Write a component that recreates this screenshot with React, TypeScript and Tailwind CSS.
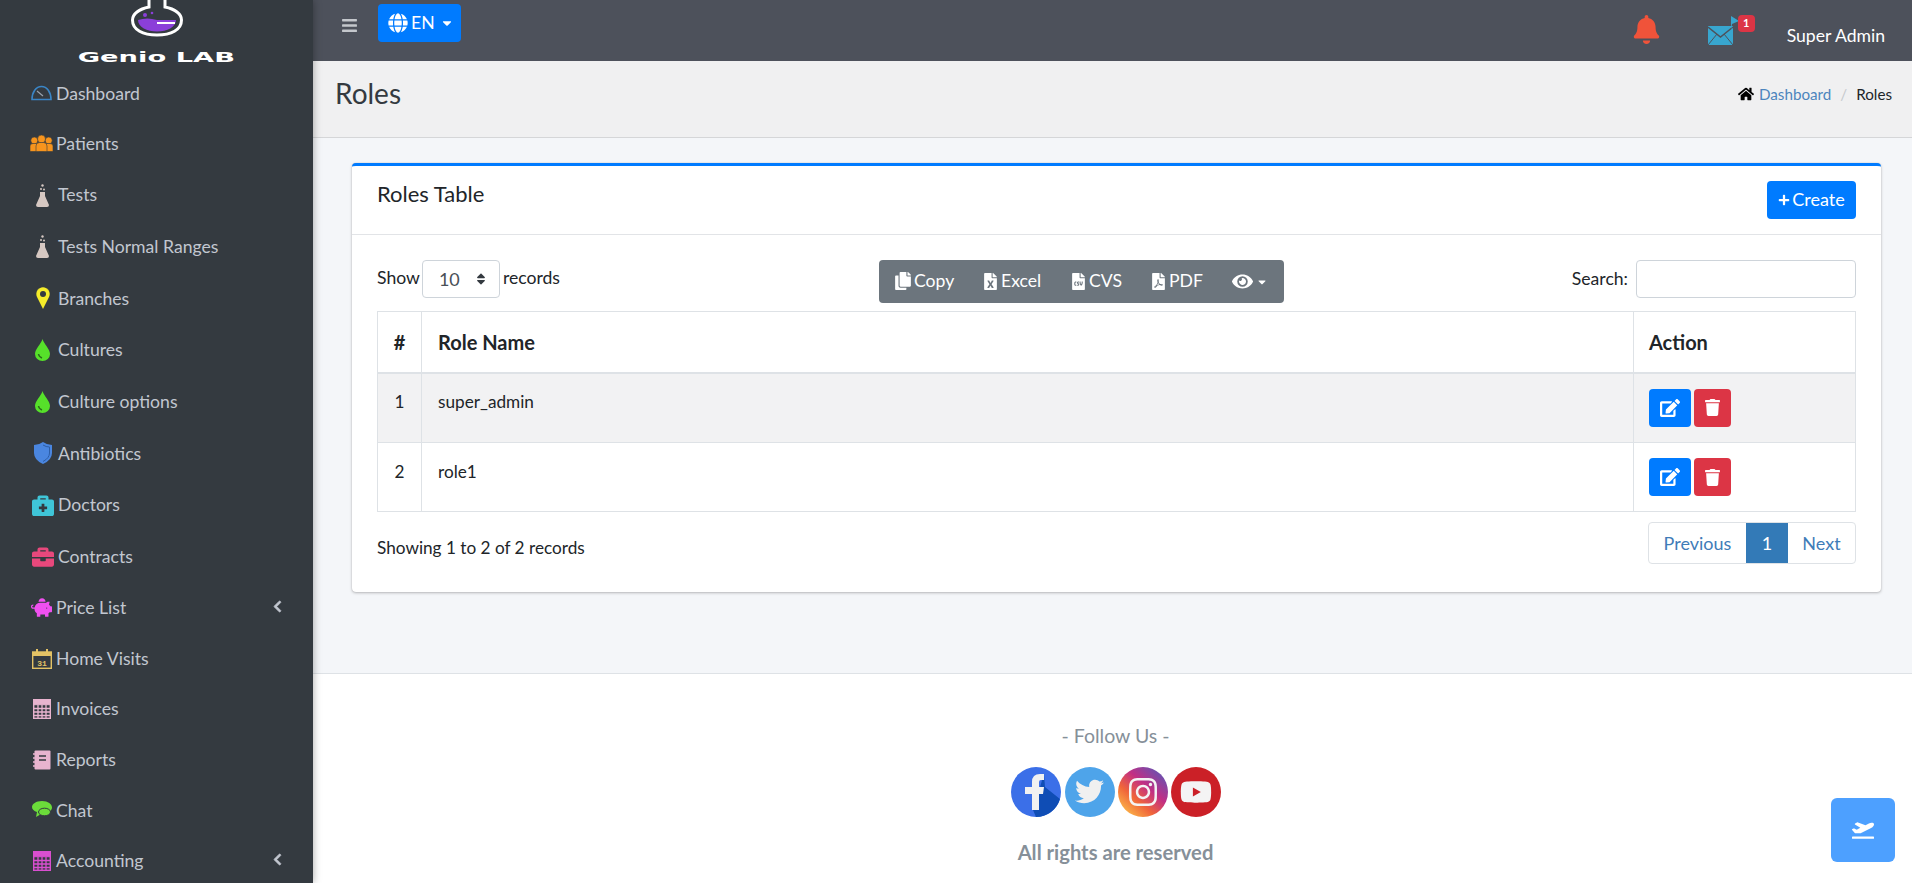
import { ReactNode } from "react";
import {
  FaBars, FaBell, FaCaretDown, FaChevronLeft, FaCopy, FaEdit, FaEye, FaFileCsv,
  FaFileExcel, FaFilePdf, FaGlobe, FaHome, FaInstagram, FaPiggyBank, FaPlaneDeparture, FaPlus,
  FaSort, FaTrash, FaTwitter, FaYoutube, FaBriefcase, FaBriefcaseMedical,
} from "react-icons/fa";

const Gauge = () => (
  <svg width="21" height="16" viewBox="0 0 21 16" fill="none" stroke="#3a85c6" strokeWidth="1.6">
    <path d="M1 14.5 C1 7 5 1.500 10.500 1.500 S20 7 20 14.500 Z" />
    <path d="M6 6 L12 11" strokeWidth="1.2" stroke="#9aa3ad" />
  </svg>
);

const People = () => (
  <svg width="23" height="17" viewBox="0 0 23 17" fill="#f7941d" stroke="#343a40" strokeWidth="0.6">
    <circle cx="4.300" cy="5.500" r="3.500" />
    <circle cx="18.700" cy="5.500" r="3.500" />
    <path d="M0 16.500 V11 Q0 8.500 3 8.500 H6 Q9 8.500 9 11 V16.500 Z" />
    <path d="M14 16.500 V11 Q14 8.500 17 8.500 H20 Q23 8.500 23 11 V16.500 Z" />
    <circle cx="11.500" cy="4" r="4" />
    <path d="M6 16.500 V11 Q6 7.500 9.500 7.500 H13.500 Q17 7.500 17 11 V16.500 Z" />
  </svg>
);

const Flask = () => (
  <svg width="13" height="23" viewBox="0 0 13 23" fill="#d6c8c2">
    <circle cx="6.500" cy="1.500" r="1.200" />
    <circle cx="5" cy="5" r="1" />
    <circle cx="8" cy="5.500" r="1" />
    <path d="M4 8 H9 V12 L13 21 Q13 23 11 23 H2 Q0 23 0 21 L4 12 Z" />
  </svg>
);

const Pin = () => (
  <svg width="14" height="22" viewBox="0 0 14 22">
    <path d="M7 22 L1 10 A6.700 6.700 0 1 1 13 10 Z" fill="#f5ec2a" />
    <circle cx="7" cy="7" r="3" fill="#343a40" />
  </svg>
);

const Drop = () => (
  <svg width="15" height="22" viewBox="0 0 15 22">
    <path d="M7.500 0 C9 5 15 10 15 15 A7.500 7 0 0 1 0 15 C0 10 6 5 7.500 0 Z" fill="#56e02a" />
    <path d="M3.500 15 Q4 18 7 19" fill="none" stroke="#2a6b1a" strokeWidth="1.500" />
  </svg>
);

const Shield = () => (
  <svg width="18" height="22" viewBox="0 0 18 22">
    <path d="M9 0 Q13 3 18 3 V11 Q18 18 9 22 Q0 18 0 11 V3 Q5 3 9 0 Z" fill="#4a86e0" />
    <path d="M9 3 Q12 5 15.500 5 V11 Q15.500 16 9 19.500" fill="none" stroke="#2c5da6" strokeWidth="1" />
  </svg>
);

const Calendar = () => (
  <svg width="20" height="20" viewBox="0 0 20 20">
    <rect x="0.700" y="3" width="18.600" height="16.300" fill="none" stroke="#e3c265" strokeWidth="1.400" />
    <rect x="0.700" y="3" width="18.600" height="4" fill="#e3c265" />
    <rect x="4" y="0" width="2" height="5" fill="#e3c265" />
    <rect x="14" y="0" width="2" height="5" fill="#e3c265" />
    <text x="10" y="16.500" textAnchor="middle" fontSize="8" fontWeight="700" fill="#e3c265" fontFamily="Liberation Mono, monospace">
      31
    </text>
  </svg>
);

const Calc = ({ color }: { color: string }) => (
  <svg width="18" height="20" viewBox="0 0 18 20" fill="none" stroke={color}>
    <rect x="0.700" y="0.700" width="16.600" height="18.600" strokeWidth="1.400" />
    <rect x="0.700" y="0.700" width="16.600" height="5" fill={color} />
    <path d="M0.700 9.500 H17.300 M0.700 13 H17.300 M0.700 16.500 H17.300 M5 6 V19 M9 6 V19 M13 6 V19" strokeWidth="1.300" />
  </svg>
);

const Notebook = () => (
  <svg width="18" height="20" viewBox="0 0 18 20">
    <rect x="1.500" y="0.500" width="16" height="19" rx="1" fill="#e8b4cf" />
    <path d="M6 6 H13 M6 10 H13" stroke="#343a40" strokeWidth="1.600" />
    <path d="M0 4 H3 M0 8 H3 M0 12 H3 M0 16 H3" stroke="#e8b4cf" strokeWidth="1.400" />
  </svg>
);

const Chat = () => (
  <svg width="20" height="18" viewBox="0 0 20 18">
    <path d="M10 0 C16 0 20 3 20 6.500 C20 10 16 12 11 12 L4 16 L5 11 C2 10 0 8.500 0 6 C0 3 4 0 10 0 Z" fill="#6bdc3a" />
    <ellipse cx="12.500" cy="11" rx="6" ry="3.800" fill="#6bdc3a" stroke="#343a40" />
  </svg>
);

type NavItem = { label: string; icon: ReactNode; wide?: boolean; arrow?: boolean };

const navItems: NavItem[] = [
  { label: "Dashboard", icon: <Gauge /> },
  { label: "Patients", icon: <People /> },
  { label: "Tests", icon: <Flask />, wide: true },
  { label: "Tests Normal Ranges", icon: <Flask />, wide: true },
  { label: "Branches", icon: <Pin />, wide: true },
  { label: "Cultures", icon: <Drop />, wide: true },
  { label: "Culture options", icon: <Drop />, wide: true },
  { label: "Antibiotics", icon: <Shield />, wide: true },
  { label: "Doctors", icon: <FaBriefcaseMedical size={22} color="#3fc5d8" />, wide: true },
  { label: "Contracts", icon: <FaBriefcase size={22} color="#e8487c" />, wide: true },
  { label: "Price List", icon: <FaPiggyBank size={21} color="#f050f0" />, arrow: true },
  { label: "Home Visits", icon: <Calendar /> },
  { label: "Invoices", icon: <Calc color="#e8b4cf" /> },
  { label: "Reports", icon: <Notebook /> },
  { label: "Chat", icon: <Chat /> },
  { label: "Accounting", icon: <Calc color="#d94fd0" />, arrow: true },
];

function Sidebar() {
  return (
    <aside className="relative z-10 h-[883px] w-[313px] shrink-0 overflow-hidden bg-[#343a40] text-[17.6px] text-[#c2c7d0] shadow-[0_0_8px_rgba(0,0,0,0.35)]">
      <div className="flex h-[68px] flex-col items-center">
        <svg width="52" height="37" viewBox="0 0 52 37" fill="none">
          <path d="M18 0 V7 C8 9 1.500 14 1.500 20 C1.500 30 12 35 26 35 S50.500 30 50.500 20 C50.500 14 44 9 34 7 V0" stroke="#fff" strokeWidth="3" />
          <path d="M7 20 Q16 17 26 20 H45 C45 27 36 31.500 26 31.500 S7 27 7 20 Z" fill="#8b3fd9" />
          <path d="M26 23 H44" stroke="#fff" strokeWidth="2" />
          <circle cx="14" cy="15" r="2" fill="#8b3fd9" />
          <circle cx="21" cy="13" r="1.300" fill="#8b3fd9" />
        </svg>
        <span className="mt-[14px] inline-block scale-x-[1.95] text-[14px] leading-[12px] font-bold text-white [font-family:'DejaVu_Sans',sans-serif]">
          Genio LAB
        </span>
      </div>
      <nav>
        {navItems.map((item) => (
          <div
            key={item.label}
            className={`relative flex items-center pl-[30px] ${item.wide ? "h-[51.7px]" : "h-[50.6px]"}`}
          >
            <span className={`mr-[3px] flex h-[24px] items-center justify-center ${item.wide ? "w-[25px]" : "w-[23px]"}`}>
              {item.icon}
            </span>
            <span className="leading-none">{item.label}</span>
            {item.arrow && (
              <FaChevronLeft size={13} color="#c2c7d0" stroke="#c2c7d0" strokeWidth={30} className="absolute top-[17px] right-[29px]" />
            )}
          </div>
        ))}
      </nav>
    </aside>
  );
}

function Topbar() {
  return (
    <header className="flex h-[61px] shrink-0 items-start bg-[#4d515b] pl-[28px] text-white">
      <FaBars size={17} color="#c4c7cc" className="mt-[17px]" />
      <button className="mt-[4px] ml-[20px] flex h-[38px] w-[83px] items-center gap-[3px] rounded-[4px] bg-[#007bff] pl-[10px] text-[17.6px]">
        <FaGlobe size={20} />
        <span>EN</span>
        <FaCaretDown size={14} className="ml-[2px]" />
      </button>
      <div className="ml-auto flex items-start">
        <FaBell size={29} color="#f0533a" className="mt-[15px] mr-[47px]" />
        <div className="relative mt-[24px] mr-[53px]">
          <svg width="26" height="21" viewBox="0 0 26 21">
            <rect width="25" height="19" y="2" fill="#38a6cf" />
            <path d="M0 3 L12.500 13 L25 3" fill="none" stroke="#4d515b" strokeWidth="1.500" />
            <path d="M0 21 L9 10 M25 21 L16 10" stroke="#4d515b" />
          </svg>
          <svg width="9" height="14" viewBox="0 0 9 14" className="absolute -top-[8px] left-[22px]">
            <path d="M1 14 V0 L9 5 L2 8" fill="#38a6cf" />
          </svg>
          <span className="absolute -top-[9px] left-[30px] flex h-[17px] w-[17px] items-center justify-center rounded-[4px] bg-[#dc3545] text-[11px] font-bold text-white">
            1
          </span>
        </div>
        <span className="mt-[24px] mr-[27px] text-[17.6px] leading-[24px]">Super Admin</span>
      </div>
    </header>
  );
}

function PageHeader() {
  return (
    <div className="flex h-[77px] shrink-0 items-start justify-between border-b border-[#d5d6d8] bg-[#f0f0f1] pt-[18px] pr-[20px] pl-[22px]">
      <h1 className="text-[28px] leading-[28px] text-[#343a40]">Roles</h1>
      <div className="mt-[1px] flex items-center text-[15.2px] leading-[28px]">
        <FaHome size={16} color="#000" className="mr-[5px]" />
        <span className="text-[#4c85bd]">Dashboard</span>
        <span className="mx-[9px] text-[#c5c9cd]">/</span>
        <span className="text-[#212529]">Roles</span>
      </div>
    </div>
  );
}

function Toolbar() {
  const tools = [
    { icon: <FaCopy size={18} />, label: "Copy", width: "w-[88px]" },
    { icon: <FaFileExcel size={17} />, label: "Excel", width: "w-[88px]" },
    { icon: <FaFileCsv size={17} />, label: "CVS", width: "w-[80px]" },
    { icon: <FaFilePdf size={17} />, label: "PDF", width: "w-[80px]" },
  ];
  return (
    <div className="flex h-[43px] w-[405px] items-center rounded-[4px] bg-[#6c757d] pl-[15px] text-[17.6px] text-white">
      {tools.map((t) => (
        <span key={t.label} className={`flex items-center gap-[2px] ${t.width}`}>
          {t.icon}
          {t.label}
        </span>
      ))}
      <span className="ml-[2px] flex items-center gap-[3px]">
        <FaEye size={21} />
        <FaCaretDown size={12} />
      </span>
    </div>
  );
}

function ActionButtons() {
  return (
    <div className="flex gap-[3px]">
      <button className="flex h-[38px] w-[42px] items-center justify-center rounded-[4px] bg-[#007bff] text-white">
        <FaEdit size={20} />
      </button>
      <button className="flex h-[38px] w-[37px] items-center justify-center rounded-[4px] bg-[#dc3545] text-white">
        <FaTrash size={17} />
      </button>
    </div>
  );
}

function RolesCard() {
  const rows = [
    { id: 1, name: "super_admin", bg: "bg-[#f2f2f3]", h: "h-[70px]", pt: "pt-[16px]" },
    { id: 2, name: "role1", bg: "bg-white", h: "h-[69px]", pt: "pt-[17px]" },
  ];
  return (
    <section className="mt-[25px] mr-[31px] ml-[39px] h-[429px] rounded-[4px] border-t-[3px] border-[#007bff] bg-white shadow-[0_0_1px_rgba(0,0,0,0.2),0_1px_3px_rgba(0,0,0,0.25)]">
      <div className="flex h-[69px] items-start justify-between border-b border-[#e2e4e7] pr-[25px] pl-[25px]">
        <h3 className="mt-[14px] text-[22px] leading-[28px] text-[#212529]">Roles Table</h3>
        <button className="mt-[15px] flex h-[38px] w-[89px] items-center justify-center gap-[2px] rounded-[4px] bg-[#007bff] pb-[2px] text-[18px] text-white">
          <FaPlus size={12} className="mt-[2px]" />
          Create
        </button>
      </div>
      <div className="px-[25px] pt-[25px] text-[#212529]">
        <div className="flex h-[51px] items-start">
          <div className="flex w-[502px] items-center text-[17.6px]">
            <span className="mb-[2px]">Show</span>
            <div className="mr-[3px] ml-[2px] flex h-[38px] w-[78px] items-center justify-between rounded-[4px] border border-[#ced4da] pr-[11px] pl-[16px] text-[18px] text-[#495057]">
              10
              <FaSort size={14} color="#343a40" />
            </div>
            <span className="mb-[2px]">records</span>
          </div>
          <Toolbar />
          <div className="ml-auto flex items-center text-[17.6px]">
            Search:
            <input className="ml-[8px] h-[38px] w-[220px] rounded-[4px] border border-[#ced4da] bg-white" />
          </div>
        </div>
        <table className="w-full table-fixed border-collapse border border-[#dee2e6] text-[17.2px]">
          <colgroup>
            <col className="w-[44px]" />
            <col />
            <col className="w-[222px]" />
          </colgroup>
          <thead>
            <tr className="h-[61px] border-b-2 border-[#dee2e6] text-left text-[20px] font-bold">
              <th className="border-r border-[#dee2e6] text-center">#</th>
              <th className="border-r border-[#dee2e6] pl-[16px]">Role Name</th>
              <th className="pl-[15px]">Action</th>
            </tr>
          </thead>
          <tbody>
            {rows.map((r) => (
              <tr key={r.id} className={`${r.h} border-b border-[#dee2e6] ${r.bg}`}>
                <td className={`border-r border-[#dee2e6] ${r.pt} pb-0 text-center align-top leading-[24px]`}>{r.id}</td>
                <td className={`border-r border-[#dee2e6] ${r.pt} pl-[16px] align-top leading-[24px]`}>{r.name}</td>
                <td className="pl-[15px]">
                  <ActionButtons />
                </td>
              </tr>
            ))}
          </tbody>
        </table>
        <div className="mt-[10px] flex items-start justify-between">
          <span className="mt-[14px] text-[17.2px] leading-[24px]">Showing 1 to 2 of 2 records</span>
          <div className="flex h-[42px] w-[208px] overflow-hidden rounded-[4px] border border-[#dee2e6] text-[18px] text-[#3f7cb8]">
            <span className="flex w-[97px] items-center justify-center">Previous</span>
            <span className="flex w-[42px] items-center justify-center bg-[#337ab7] text-white">1</span>
            <span className="flex flex-1 items-center justify-center">Next</span>
          </div>
        </div>
      </div>
    </section>
  );
}

function SocialIcons() {
  return (
    <div className="flex gap-[3px]">
      <svg width="50" height="50" viewBox="0 0 50 50">
        <circle cx="25" cy="25" r="25" fill="#3b6fe8" />
        <path d="M33 7 L34 20 L49 32 A25 25 0 0 1 25 50 L22 43 Z" fill="#0f4db5" />
        <path d="M21 43 V27 H14 V20 H21 V15 Q21 7 29 7 H33 V13 H30 Q28 13 28 15 V20 H33 L32 27 H28 V43 Z" fill="#f1f1f1" />
      </svg>
      <svg width="50" height="50" viewBox="0 0 50 50" className="ml-[1px]">
        <circle cx="25" cy="25" r="25" fill="#4ea4ea" />
        <FaTwitter x={10} y={10} size={29} color="#f0f0f0" />
      </svg>
      <svg width="50" height="50" viewBox="0 0 50 50">
        <defs>
          <linearGradient id="insta" x1="0.100" y1="0.950" x2="0.850" y2="0.100">
            <stop offset="0" stopColor="#fdc14a" />
            <stop offset="0.350" stopColor="#f0653a" />
            <stop offset="0.650" stopColor="#c22f84" />
            <stop offset="1" stopColor="#6a50b0" />
          </linearGradient>
        </defs>
        <circle cx="25" cy="25" r="25" fill="url(#insta)" />
        <FaInstagram x={9} y={9} size={32} color="#f4f4f4" />
      </svg>
      <svg width="50" height="50" viewBox="0 0 50 50">
        <circle cx="25" cy="25" r="25" fill="#cb2027" />
        <FaYoutube x={9} y={9} size={32} color="#f4f4f4" />
      </svg>
    </div>
  );
}

function Footer() {
  return (
    <footer className="mt-[81px] flex flex-1 flex-col items-center border-t border-[#dee2e6] bg-white pt-[50px] pl-[6px] text-[#869099]">
      <p className="text-[19.5px] leading-[24px]">- Follow Us -</p>
      <div className="mt-[19px]">
        <SocialIcons />
      </div>
      <p className="mt-[23px] text-[20.2px] leading-[24px] font-bold">All rights are reserved</p>
    </footer>
  );
}

export default function App() {
  return (
    <div className="relative flex h-[883px] w-full overflow-hidden bg-[#f4f6f9] [font-family:Lato,sans-serif]">
      <Sidebar />
      <main className="flex min-w-0 flex-1 flex-col">
        <Topbar />
        <PageHeader />
        <RolesCard />
        <Footer />
      </main>
      <button className="absolute top-[798px] left-[1831px] flex h-[64px] w-[64px] items-center justify-center rounded-[6px] bg-[#4da0ff] text-white">
        <FaPlaneDeparture size={22} />
      </button>
    </div>
  );
}
